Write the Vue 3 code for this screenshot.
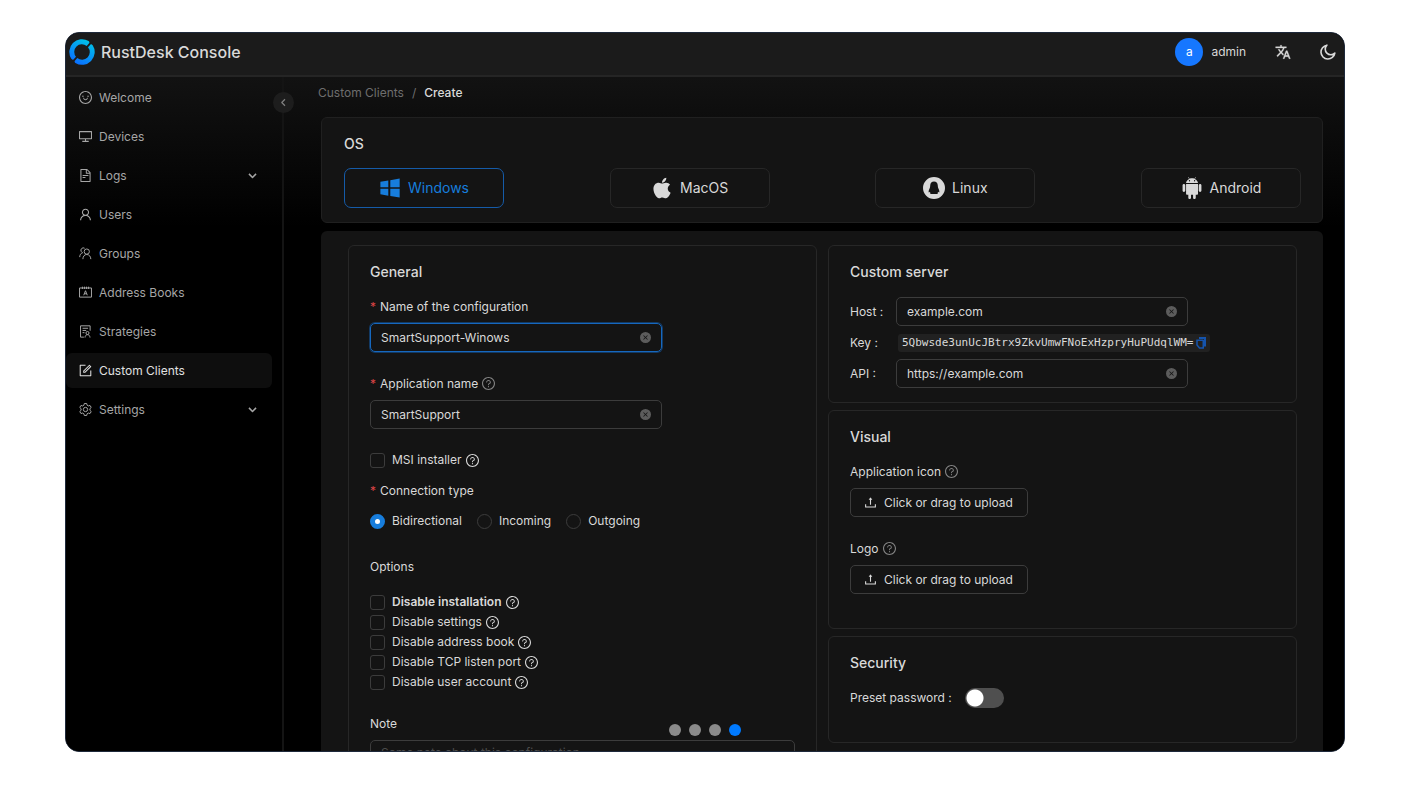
<script setup>
import { ref, h } from 'vue'

const glyphs = {
  smile: [
    'M512 64C264.6 64 64 264.6 64 512s200.6 448 448 448 448-200.6 448-448S759.4 64 512 64zm0 820c-205.4 0-372-166.6-372-372s166.6-372 372-372 372 166.6 372 372-166.6 372-372 372z',
    'M288 421a48 48 0 1096 0 48 48 0 10-96 0zm352 0a48 48 0 1096 0 48 48 0 10-96 0zM664 533h-48.1c-4.2 0-7.8 3.2-8.1 7.4C604 589.9 562.5 629 512 629s-92.1-39.1-95.8-88.6c-.3-4.2-3.9-7.4-8.1-7.4H360a8 8 0 00-8 8.4c4.4 84.3 74.5 151.6 160 151.6s155.6-67.3 160-151.6a8 8 0 00-8-8.4z',
  ],
  desktop: [
    'M928 140H96c-17.7 0-32 14.3-32 32v496c0 17.7 14.3 32 32 32h380v112H304c-8.8 0-16 7.2-16 16v48c0 4.4 3.6 8 8 8h432c4.4 0 8-3.6 8-8v-48c0-8.8-7.2-16-16-16H548V700h380c17.7 0 32-14.3 32-32V172c0-17.7-14.3-32-32-32zm-40 488H136V212h752v416z',
  ],
  file: [
    'M854.6 288.6L639.4 73.4c-6-6-14.1-9.4-22.6-9.4H192c-17.7 0-32 14.3-32 32v832c0 17.7 14.3 32 32 32h640c17.7 0 32-14.3 32-32V311.3c0-8.5-3.4-16.7-9.4-22.7zM790.2 326H602V137.8L790.2 326zm1.8 562H232V136h302v216a42 42 0 0042 42h216v494zM504 618H320c-4.4 0-8 3.6-8 8v48c0 4.4 3.6 8 8 8h184c4.4 0 8-3.6 8-8v-48c0-4.4-3.6-8-8-8zM312 490v48c0 4.4 3.6 8 8 8h384c4.4 0 8-3.6 8-8v-48c0-4.4-3.6-8-8-8H320c-4.4 0-8 3.6-8 8z',
  ],
  user: [
    'M858.5 763.6a374 374 0 00-80.6-119.5 375.63 375.63 0 00-119.5-80.6c-.4-.2-.8-.3-1.2-.5C719.5 518 760 444.7 760 362c0-137-111-248-248-248S264 225 264 362c0 82.7 40.5 156 102.8 201.1-.4.2-.8.3-1.2.5-44.8 18.9-85 46-119.5 80.6a375.63 375.63 0 00-80.6 119.5A371.7 371.7 0 00136 901.8a8 8 0 008 8.2h60c4.4 0 7.9-3.5 8-7.8 2-77.2 33-149.5 87.8-204.3 56.7-56.7 132-87.9 212.2-87.9s155.5 31.2 212.2 87.9C779 752.7 810 825 812 902.2c.1 4.4 3.6 7.8 8 7.8h60a8 8 0 008-8.2c-1-47.8-10.9-94.3-29.5-138.2zM512 534c-45.9 0-89.1-17.9-121.6-50.4S340 407.9 340 362c0-45.9 17.9-89.1 50.4-121.6S466.1 190 512 190s89.1 17.9 121.6 50.4S684 316.1 684 362c0 45.9-17.9 89.1-50.4 121.6S557.9 534 512 534z',
  ],
  form: [
    'M904 512h-56c-4.4 0-8 3.6-8 8v320H184V184h320c4.4 0 8-3.6 8-8v-56c0-4.4-3.6-8-8-8H144c-17.7 0-32 14.3-32 32v736c0 17.7 14.3 32 32 32h736c17.7 0 32-14.3 32-32V520c0-4.4-3.6-8-8-8z',
    'M355.9 534.9L354 653.8c-.1 8.9 7.1 16.2 16 16.2h.4l118-2.9c2-.1 4-.9 5.4-2.3l415.9-415c3.1-3.1 3.1-8.2 0-11.3L785.4 114.3c-1.6-1.6-3.6-2.3-5.7-2.3s-4.1.8-5.7 2.3l-415.8 415a8.3 8.3 0 00-2.3 5.6zm63.5 23.6L779.7 199l45.2 45.1-360.5 359.7-45.7 1.1.7-46.4z',
  ],
  question: [
    'M512 64C264.6 64 64 264.6 64 512s200.6 448 448 448 448-200.6 448-448S759.4 64 512 64zm0 820c-205.4 0-372-166.6-372-372s166.6-372 372-372 372 166.6 372 372-166.6 372-372 372z',
    'M623.6 316.7C593.6 290.4 554 276 512 276s-81.6 14.5-111.6 40.7C369.2 344 352 380.7 352 420v7.6c0 4.4 3.6 8 8 8h48c4.4 0 8-3.6 8-8V420c0-44.1 43.1-80 96-80s96 35.9 96 80c0 31.1-22 59.6-56.1 72.7-21.2 8.1-39.2 22.3-52.1 40.9-13.1 19-19.9 41.8-19.9 64.9V620c0 4.4 3.6 8 8 8h48c4.4 0 8-3.6 8-8v-22.7a48.3 48.3 0 0130.9-44.8c59-22.7 97.1-74.7 97.1-132.5.1-39.3-17.1-76-48.3-103.3zM472 732a40 40 0 1080 0 40 40 0 10-80 0z',
  ],
  upload: [
    'M400 317.7h73.9V656c0 4.4 3.6 8 8 8h60c4.4 0 8-3.6 8-8V317.7H624c6.7 0 10.4-7.7 6.3-12.9L518.3 163a8 8 0 00-12.6 0l-112 141.7c-4.1 5.3-.4 13 6.3 13zM878 626h-60c-4.4 0-8 3.6-8 8v154H214V634c0-4.4-3.6-8-8-8h-60c-4.4 0-8 3.6-8 8v198c0 17.7 14.3 32 32 32h684c17.7 0 32-14.3 32-32V634c0-4.4-3.6-8-8-8z',
  ],
  windows: [
    'M523.8 191.4v288.9h382V128.1zm0 642.2l382 62.2v-352h-382zM120.1 480.2H443V201.9l-322.9 53.5zm0 290.4L443 823.2V543.8H120.1z',
  ],
  apple: [
    'M747.4 535.7c-.4-68.2 30.5-119.6 92.9-157.5-34.9-50-87.7-77.5-157.3-82.8-65.9-5.2-138 38.4-164.4 38.4-27.9 0-91.7-36.6-141.9-36.6C273.1 298.8 163 379.8 163 544.6c0 48.7 8.9 99 26.7 150.8 23.8 68.2 109.6 235.3 199.1 232.6 46.8-1.1 79.9-33.2 140.8-33.2 59.1 0 89.7 33.2 141.9 33.2 90.3-1.3 167.9-153.2 190.5-221.6-121.1-57.1-114.6-167.2-114.6-170.7zm-105.1-305c50.7-60.2 46.1-115 44.6-134.7-44.8 2.6-96.6 30.5-126.1 64.8-32.5 36.8-51.6 82.3-47.5 133.6 48.4 3.7 92.6-21.2 129-63.7z',
  ],
  linux: [
    'M512 64a448 448 0 100 896 448 448 0 000-896zM512 245c95 0 150 68 153 158 3 68 10 98 32 142 26 52 42 106 28 150-16 0-32-18-46-34-6 28-16 46-32 66 22 10 30 20 28 34H349c-2-14 6-24 28-34-16-20-26-38-32-66-14 16-30 34-46 34-14-44 2-98 28-150 22-44 29-74 32-142 3-90 58-158 153-158z',
  ],
  android: [
    'M270.1 741.7c0 23.4 19.1 42.5 42.6 42.5h48.7v120.4c0 30.5 24.5 55.4 54.6 55.4 30.2 0 54.6-24.8 54.6-55.4V784.1h85v120.4c0 30.5 24.5 55.4 54.6 55.4 30.2 0 54.6-24.8 54.6-55.4V784.1h48.7c23.5 0 42.6-19.1 42.6-42.5V346.4h-486v395.3zm357.1-600.1l44.9-65c2.6-3.8 2-8.9-1.5-11.4-3.5-2.4-8.5-1.2-11.1 2.6l-46.6 67.6c-30.7-12.1-64.9-18.8-100.8-18.8-35.9 0-70.1 6.7-100.8 18.8l-46.6-67.5c-2.6-3.8-7.6-5.1-11.1-2.6-3.5 2.4-4.1 7.4-1.5 11.4l44.9 65c-71.4 33.2-121.4 96.1-127.8 169.6h486c-6.6-73.6-56.7-136.5-128-169.7zM409.5 244.1a26.9 26.9 0 1 1 26.9-26.9 26.97 26.97 0 0 1-26.9 26.9zm208.4 0a26.9 26.9 0 1 1 26.9-26.9 26.97 26.97 0 0 1-26.9 26.9zm223.4 100.7c-30.2 0-54.6 24.8-54.6 55.4v216.4c0 30.5 24.5 55.4 54.6 55.4 30.2 0 54.6-24.8 54.6-55.4V400.1c.1-30.6-24.3-55.3-54.6-55.3zm-658.6 0c-30.2 0-54.6 24.8-54.6 55.4v216.4c0 30.5 24.5 55.4 54.6 55.4 30.2 0 54.6-24.8 54.6-55.4V400.1c0-30.6-24.5-55.3-54.6-55.3z',
  ],
  clear: [
    'M512 64a448 448 0 100 896 448 448 0 000-896zM370 326L512 468 654 326l44 44L556 512l142 142-44 44L512 556 370 698l-44-44L468 512 326 370z',
  ],
}

/* Outline icons drawn with strokes on the same grid */
const outlines = {
  group: 'M600 560a180 180 0 10-1-360 180 180 0 001 360zM330 900c10-190 110-320 270-320s270 130 280 320M450 150a165 165 0 00-230 225c20 40 55 70 95 85M110 760c10-160 90-270 200-300',
  contacts: 'M100 200H924V830H100zM300 110v160M445 110v160M580 110v160M725 110v160M390 700l122-310 122 310M435 600h154',
  policy: 'M400 900H170V120H830V460M310 290H690M310 440H560M310 590H440M650 720a105 105 0 10-1-210 105 105 0 001 210zM480 930c5-120 70-200 170-200s165 80 170 200',
  gear: 'M430 100h164l28 118 84 49 118-34 82 140-90 84v110l90 84-82 140-118-34-84 49-28 118H430l-28-118-84-49-118 34-82-140 90-84V457l-90-84 82-140 118 34 84-49zM512 660a148 148 0 100-296 148 148 0 000 296z',
  down: 'M160 350l352 352 352-352',
  left: 'M660 190L340 512l320 322',
  moon: 'M450 130a390 390 0 10444 444 300 300 0 01-444-444z',
}

const Icon = (props) =>
  h(
    'svg',
    { viewBox: '64 64 896 896', 'aria-hidden': 'true', class: 'icon' },
    glyphs[props.name]
      ? glyphs[props.name].map((d) => h('path', { d, fill: 'currentColor', 'fill-rule': 'evenodd' }))
      : [
          h('path', {
            d: outlines[props.name],
            fill: 'none',
            stroke: 'currentColor',
            'stroke-width': props.weight || 68,
            'stroke-linejoin': 'round',
          }),
        ],
  )
Icon.props = ['name', 'weight']

const menu = [
  { label: 'Welcome', icon: 'smile' },
  { label: 'Devices', icon: 'desktop' },
  { label: 'Logs', icon: 'file', sub: true },
  { label: 'Users', icon: 'user' },
  { label: 'Groups', icon: 'group' },
  { label: 'Address Books', icon: 'contacts' },
  { label: 'Strategies', icon: 'policy' },
  { label: 'Custom Clients', icon: 'form' },
  { label: 'Settings', icon: 'gear', sub: true },
]
const current = 'Custom Clients'

const systems = [
  { label: 'Windows', icon: 'windows' },
  { label: 'MacOS', icon: 'apple' },
  { label: 'Linux', icon: 'linux' },
  { label: 'Android', icon: 'android' },
]
const os = ref('Windows')

const configName = ref('SmartSupport-Winows')
const appName = ref('SmartSupport')
const host = ref('example.com')
const api = ref('https://example.com')
const msi = ref(false)
const connection = ref('Bidirectional')
const connections = ['Bidirectional', 'Incoming', 'Outgoing']
const options = ref([
  { label: 'Disable installation', on: false, strong: true },
  { label: 'Disable settings', on: false },
  { label: 'Disable address book', on: false },
  { label: 'Disable TCP listen port', on: false },
  { label: 'Disable user account', on: false },
])
const note = ref('')
const preset = ref(false)
const slide = ref(4)
</script>

<template>
  <div class="page">
    <div class="window">
      <header class="topbar">
        <svg class="logo" viewBox="0 0 26 26" aria-hidden="true">
          <defs>
            <linearGradient id="ring" gradientUnits="userSpaceOnUse" x1="19" y1="2" x2="7" y2="24">
              <stop offset="0" stop-color="#00c0e8" />
              <stop offset="1" stop-color="#0a70ff" />
            </linearGradient>
          </defs>
          <path
            fill="url(#ring)"
            d="M19.6 2.1A12.7 12.7 0 0 0 2.3 19.8L4 21L7 17.7A7.6 7.6 0 0 1 17.7 7L20.3 4.1Q20.7 3 19.6 2.1zM6.4 23.9A12.7 12.7 0 0 0 23.7 6.2L22 5L19 8.3A7.6 7.6 0 0 1 8.3 19L5.7 21.9Q5.3 23 6.4 23.9z"
          />
        </svg>
        <h1>RustDesk Console</h1>
        <div class="account">
          <span class="avatar">a</span>
          <span class="name">admin</span>
        </div>
        <button class="tool" type="button" aria-label="Language">
          <svg class="icon" viewBox="0 0 24 24" aria-hidden="true">
            <path
              fill="currentColor"
              stroke="currentColor"
              stroke-width="0.5"
              d="M12.87 15.07l-2.54-2.51.03-.03c1.74-1.94 2.98-4.17 3.71-6.53H17V4h-7V2H8v2H1v1.99h11.17C11.5 7.92 10.44 9.75 9 11.35 8.07 10.32 7.3 9.19 6.69 8h-2c.73 1.63 1.73 3.17 2.98 4.56l-5.09 5.02L4 19l5-5 3.11 3.11.76-2.04zM18.5 10h-2L12 22h2l1.12-3h4.75L21 22h2l-4.5-12zm-2.62 7l1.62-4.33L19.12 17h-3.24z"
            />
          </svg>
        </button>
        <button class="tool" type="button" aria-label="Dark theme"><Icon name="moon" :weight="90" /></button>
      </header>

      <div class="body">
        <nav class="sidebar">
          <a v-for="m in menu" :key="m.label" href="#" :class="{ active: m.label === current }">
            <Icon :name="m.icon" />
            <span>{{ m.label }}</span>
            <Icon v-if="m.sub" name="down" class="caret" :weight="150" />
          </a>
          <button class="collapse" type="button" aria-label="Collapse menu"><Icon name="left" :weight="120" /></button>
        </nav>

        <main>
          <div class="crumbs">
            <a href="#">Custom Clients</a><span>/</span><b>Create</b>
          </div>

          <section class="card os">
            <h2>OS</h2>
            <div class="systems">
              <button
                v-for="s in systems"
                :key="s.label"
                type="button"
                :class="{ on: os === s.label }"
                @click="os = s.label"
              >
                <Icon :name="s.icon" />{{ s.label }}
              </button>
            </div>
          </section>

          <form class="sheet" @submit.prevent>
            <section class="card">
              <h2>General</h2>
              <div class="field">
                <label for="cfg" class="req">Name of the configuration</label>
                <div class="text focus">
                  <input id="cfg" v-model="configName" type="text" />
                  <button type="button" aria-label="Clear name" @click="configName = ''"><Icon name="clear" /></button>
                </div>
              </div>
              <div class="field">
                <label for="app" class="req">Application name <Icon name="question" class="dim" /></label>
                <div class="text">
                  <input id="app" v-model="appName" type="text" />
                  <button type="button" aria-label="Clear application name" @click="appName = ''"><Icon name="clear" /></button>
                </div>
              </div>
              <label class="choice msi"><input v-model="msi" type="checkbox" />MSI installer <Icon name="question" /></label>
              <div class="field" role="radiogroup" aria-labelledby="conn">
                <span id="conn" class="label req">Connection type</span>
                <div class="radios">
                  <label v-for="c in connections" :key="c" class="choice">
                    <input v-model="connection" type="radio" name="connection" :value="c" />{{ c }}
                  </label>
                </div>
              </div>
              <div class="field" role="group" aria-labelledby="opts">
                <span id="opts" class="label">Options</span>
                <div class="checks">
                  <label v-for="o in options" :key="o.label" class="choice" :class="{ strong: o.strong }">
                    <input v-model="o.on" type="checkbox" />{{ o.label }} <Icon name="question" />
                  </label>
                </div>
              </div>
              <div class="field">
                <label for="note">Note</label>
                <textarea id="note" v-model="note" rows="4" placeholder="Some note about this configuration"></textarea>
              </div>
            </section>

            <div class="column">
              <section class="card">
                <h2>Custom server</h2>
                <div class="server">
                  <label for="host">Host :</label>
                  <div class="text">
                    <input id="host" v-model="host" type="text" />
                    <button type="button" aria-label="Clear host" @click="host = ''"><Icon name="clear" /></button>
                  </div>
                  <span>Key :</span>
                  <div class="key">
                    <code>5Qbwsde3unUcJBtrx9ZkvUmwFNoExHzpryHuPUdqlWM=</code>
                    <button type="button" aria-label="Copy key">
                      <svg viewBox="0 0 10 12" aria-hidden="true">
                        <path fill="none" stroke="currentColor" stroke-width="2" d="M3 1H9V9.500" />
                        <path fill="none" stroke="currentColor" stroke-width="1.5" d="M7.500 3.250H1V8L3.500 11H7.250V3" />
                      </svg>
                    </button>
                  </div>
                  <label for="api">API :</label>
                  <div class="text">
                    <input id="api" v-model="api" type="text" />
                    <button type="button" aria-label="Clear API" @click="api = ''"><Icon name="clear" /></button>
                  </div>
                </div>
              </section>

              <section class="card">
                <h2>Visual</h2>
                <div class="field">
                  <span class="label">Application icon <Icon name="question" class="dim" /></span>
                  <button class="upload" type="button"><Icon name="upload" />Click or drag to upload</button>
                </div>
                <div class="field">
                  <span class="label">Logo <Icon name="question" class="dim" /></span>
                  <button class="upload" type="button"><Icon name="upload" />Click or drag to upload</button>
                </div>
              </section>

              <section class="card">
                <h2>Security</h2>
                <div class="field preset">
                  <label for="preset">Preset password :</label>
                  <input id="preset" v-model="preset" class="switch" type="checkbox" role="switch" />
                </div>
              </section>
            </div>
          </form>
        </main>
      </div>

      <div class="dots">
        <button
          v-for="n in 4"
          :key="n"
          type="button"
          :aria-label="`Slide ${n}`"
          :class="{ on: slide === n }"
          @click="slide = n"
        ></button>
      </div>
    </div>
  </div>
</template>

<style>
html,
body {
  margin: 0;
  background: #fff;
}
</style>

<style scoped>
* {
  box-sizing: border-box;
}
.page {
  height: 100vh;
  padding: 32px 72px 36px 65px;
  font-family: Inter, "Liberation Sans", sans-serif;
  font-size: 12px;
  line-height: 20px;
  color: #d9d9d9;
}
button,
input,
textarea {
  margin: 0;
  padding: 0;
  border: 0;
  background: none;
  font: inherit;
  color: inherit;
}
button {
  cursor: pointer;
}
a {
  color: inherit;
  text-decoration: none;
}
:deep(.icon) {
  flex: none;
  width: 13px;
  height: 13px;
}
.window {
  position: relative;
  display: flex;
  flex-direction: column;
  height: 100%;
  overflow: hidden;
  border: 1px solid #1e293b;
  border-radius: 14px;
  background: #000;
}
.topbar {
  flex: none;
  display: flex;
  align-items: center;
  height: 44px;
  padding: 0 8px 4px 3px;
  border-bottom: 2px solid #252525;
  background: #1b1b1b;
}
.logo {
  width: 26px;
  height: 26px;
}
h1 {
  margin: 0 auto 0 6px;
  font-size: 16px;
  font-weight: 500;
}
.account {
  display: flex;
  align-items: center;
  gap: 8px;
}
.avatar {
  display: grid;
  place-items: center;
  width: 28px;
  height: 28px;
  border-radius: 50%;
  background: #1677ff;
  color: #fff;
}
.tool {
  display: flex;
  margin-left: 29px;
}
.tool :deep(.icon),
.tool .icon {
  width: 16px;
  height: 16px;
}
.body {
  flex: 1;
  min-height: 0;
  display: flex;
  background: linear-gradient(#121212, #000 150px);
}
.sidebar {
  position: relative;
  flex: none;
  display: flex;
  flex-direction: column;
  gap: 4px;
  width: 218px;
  padding: 3px 10px 0 0;
  border-right: 2px solid #141414;
  color: #a6a6a6;
}
.sidebar a {
  display: flex;
  align-items: center;
  gap: 7px;
  height: 35px;
  padding: 0 15px 0 13px;
  border-radius: 6px;
}
.sidebar a.active {
  background: #0e0e0e;
  color: #e0e0e0;
}
.sidebar :deep(.caret) {
  width: 9px;
  height: 9px;
  margin-left: auto;
}
.collapse {
  position: absolute;
  top: 15px;
  right: -12px;
  display: grid;
  place-items: center;
  width: 21px;
  height: 21px;
  border-radius: 50%;
  background: #1d1d1d;
  color: #808080;
}
.collapse :deep(.icon) {
  width: 9px;
  height: 9px;
}
main {
  flex: 1;
  min-width: 0;
  display: flex;
  flex-direction: column;
  padding: 6px 21px 0 37px;
}
.crumbs {
  display: flex;
  gap: 8px;
  margin: 0 0 14px -3px;
  color: #6e6e6e;
}
.crumbs b {
  font-weight: 500;
  color: #d9d9d9;
}
.card {
  padding: 16px 21px 13px;
  border: 1px solid #272727;
  border-radius: 6px;
  background: #141414;
}
h2 {
  margin: 0 0 14px;
  font-size: 14px;
  font-weight: 500;
}
.os {
  padding: 16px 21px 14px 22px;
  border-color: #202020;
}
.systems {
  display: flex;
  justify-content: space-between;
}
.systems button {
  display: flex;
  align-items: center;
  justify-content: center;
  gap: 7px;
  width: 160px;
  height: 40px;
  border: 1px solid #272727;
  border-radius: 7px;
  font-size: 14px;
}
.systems button.on {
  border-color: #155ba8;
  color: #177ddc;
}
.systems :deep(.icon) {
  width: 22px;
  height: 22px;
}
.sheet {
  flex: 1;
  display: grid;
  grid-template-columns: 1fr 1fr;
  align-items: start;
  gap: 11px;
  margin-top: 8px;
  padding: 14px 26px 14px 27px;
  border-radius: 6px 6px 0 0;
  background: #141414;
}
.column {
  display: flex;
  flex-direction: column;
  gap: 7px;
}
.field {
  margin-bottom: 21px;
}
.field > label,
.label {
  display: flex;
  align-items: center;
  gap: 4px;
  height: 21px;
  margin-bottom: 6px;
}
.req::before {
  content: "*";
  color: #dc4446;
}
:deep(.dim) {
  color: #858585;
}
.text {
  display: flex;
  align-items: center;
  width: 292px;
  max-width: 100%;
  height: 29px;
  padding: 0 10px;
  border: 1px solid #3c3c3c;
  border-radius: 5px;
}
.text.focus {
  border-color: #1668bf;
  box-shadow: 0 0 0 1px #133a64;
}
.text input {
  flex: 1;
  min-width: 0;
  outline: none;
}
.text button {
  display: flex;
  color: #5c5c5c;
}
.text :deep(.icon) {
  width: 11px;
  height: 11px;
}
.choice {
  display: flex;
  align-items: center;
  gap: 4px;
  height: 20px;
}
.choice input {
  appearance: none;
  width: 15px;
  height: 15px;
  margin-right: 3px;
  border: 1px solid #3c3c3c;
  border-radius: 3px;
}
.choice input[type="radio"] {
  border-radius: 50%;
}
.choice input:checked {
  border: 5px solid #177ddc;
  background: #fff;
}
.msi {
  margin-bottom: 10px;
}
.radios {
  display: flex;
  align-items: center;
  gap: 15px;
  height: 28px;
}
.checks {
  padding-top: 9px;
}
.strong {
  font-weight: 600;
}
textarea {
  display: block;
  width: 100%;
  padding: 2px 10px;
  border: 1px solid #3c3c3c;
  border-radius: 5px;
  resize: none;
}
textarea::placeholder {
  color: #4c4c4c;
}
.server {
  display: grid;
  grid-template-columns: 46px 1fr;
  grid-auto-rows: 31px;
  align-items: center;
}
.key {
  display: flex;
  align-items: center;
  gap: 3px;
  justify-self: start;
  height: 18px;
  margin-left: 2px;
  padding: 0 4px;
  border-radius: 3px;
  background: #212121;
}
code {
  font-family: "DejaVu Sans Mono", "Liberation Mono", monospace;
  font-size: 11px;
}
.key button {
  display: flex;
  color: #1554ad;
}
.key svg {
  width: 10px;
  height: 12px;
}
.upload {
  display: flex;
  align-items: center;
  gap: 7px;
  height: 29px;
  padding: 0 14px 0 13px;
  border: 1px solid #3c3c3c;
  border-radius: 5px;
}
.preset {
  display: flex;
  align-items: center;
  gap: 13px;
}
.preset > label {
  margin: 0;
}
.switch {
  appearance: none;
  width: 39px;
  height: 20px;
  border-radius: 10px;
  background: radial-gradient(circle at 10px 10px, #fff 8px, #4f4f4f 9px);
}
.switch:checked {
  background: radial-gradient(circle at 29px 10px, #fff 8px, #177ddc 9px);
}
.dots {
  position: absolute;
  left: 0;
  right: 0;
  bottom: 15px;
  display: flex;
  justify-content: center;
  gap: 8px;
}
.dots button {
  width: 12px;
  height: 12px;
  border-radius: 50%;
  background: #8a8a8a;
}
.dots button.on {
  background: #007aff;
}
</style>
